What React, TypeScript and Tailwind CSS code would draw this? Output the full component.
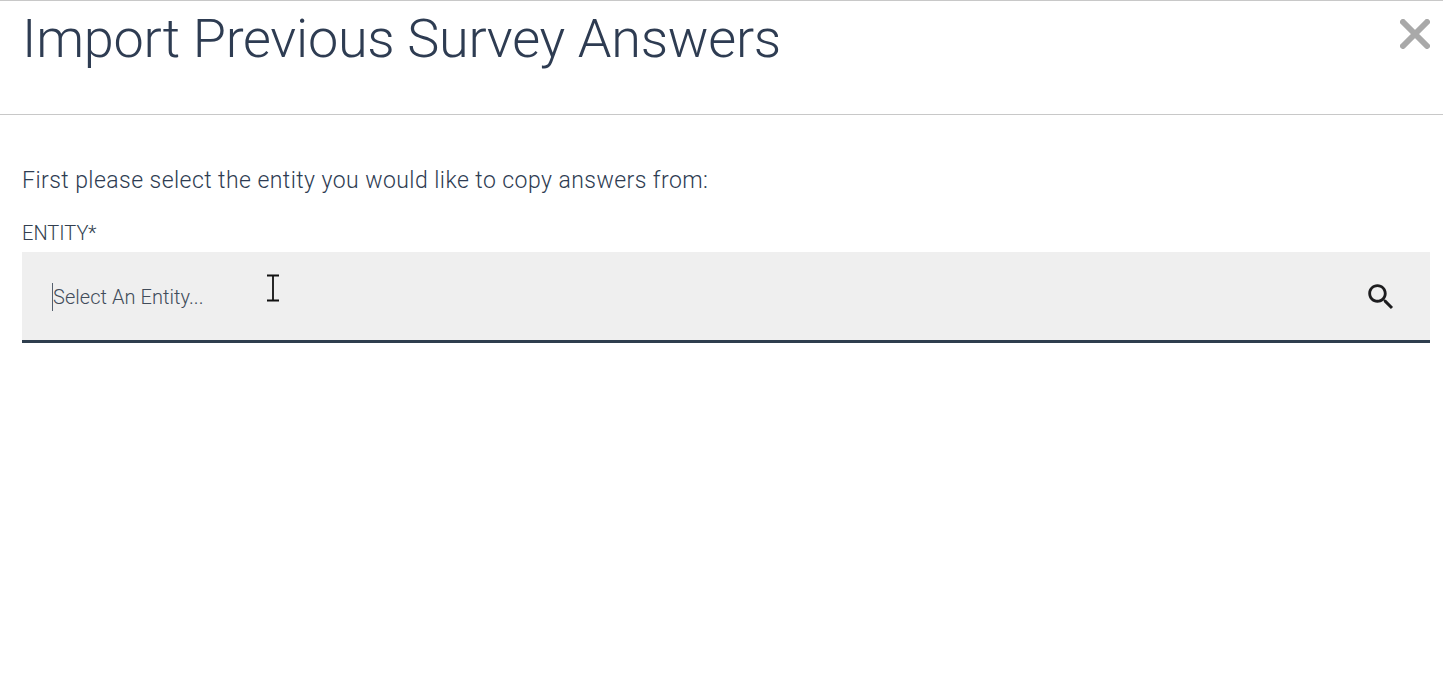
export default function App() {
    return (
        <div className="h-[681px] w-[1443px] overflow-hidden bg-white font-['Roboto','Noto_Sans',sans-serif] text-[#333f50]">
            <div className="flex h-[115px] items-start justify-between border-y border-[#c8c8c8] pl-[22px] pr-[13px]">
                <h1 className="mt-[7px] text-[54px] leading-[62px] font-light tracking-[-0.27px] text-[#2e3c52]">Import Previous Survey Answers</h1>
                <svg className="mt-[18px]" width="30" height="30" viewBox="0 0 30 30" aria-hidden="true">
                    <path d="M3 3 L27 27 M27 3 L3 27" stroke="#a9a9a9" strokeWidth="6" strokeLinecap="round" />
                </svg>
            </div>

            <div className="pl-[22px] pr-[13px]">
                <p className="mt-[51px] text-[23px] leading-[30px] font-light tracking-[0.44px] text-[#2e3c52]">First please select the entity you would like to copy answers from:</p>
                <label className="mt-[24px] block text-[20px] leading-[26px] font-light text-[#333f4f]">ENTITY*</label>
                <div className="relative mt-[6px] flex h-[91px] items-center justify-between border-b-[3px] border-[#2f3e4e] bg-[#efefef] pl-[30px] pr-[32px] pt-[2px]">
                    <div className="flex items-center">
                        <span className="h-[28px] w-px bg-[#55606e]" />
                        <span className="text-[20px] font-light tracking-[0.05px] text-[#414c5a]">Select An Entity...</span>
                    </div>
                    <svg width="34" height="34" viewBox="0 0 24 24" fill="#1d1d1f" aria-hidden="true">
                        <path d="M15.5 14h-.79l-.28-.27C15.41 12.59 16 11.11 16 9.5 16 5.91 13.09 3 9.5 3S3 5.91 3 9.5 5.91 16 9.5 16c1.61 0 3.09-.59 4.23-1.57l.27.28v.79l5 4.99L20.49 19l-4.99-5zm-6 0C7.01 14 5 11.99 5 9.5S7.01 5 9.5 5 14 7.01 14 9.5 11.99 14 9.5 14z" />
                    </svg>
                    {/* mouse cursor */}
                    <svg className="absolute left-[244px] top-[22px]" width="14" height="28" viewBox="0 0 14 28" aria-hidden="true">
                        <path d="M1 1.5 H13 M7 1.5 V26.5 M1 26.5 H13" stroke="#111111" strokeWidth="1.8" fill="none" />
                    </svg>
                </div>
            </div>
        </div>
    )
}
